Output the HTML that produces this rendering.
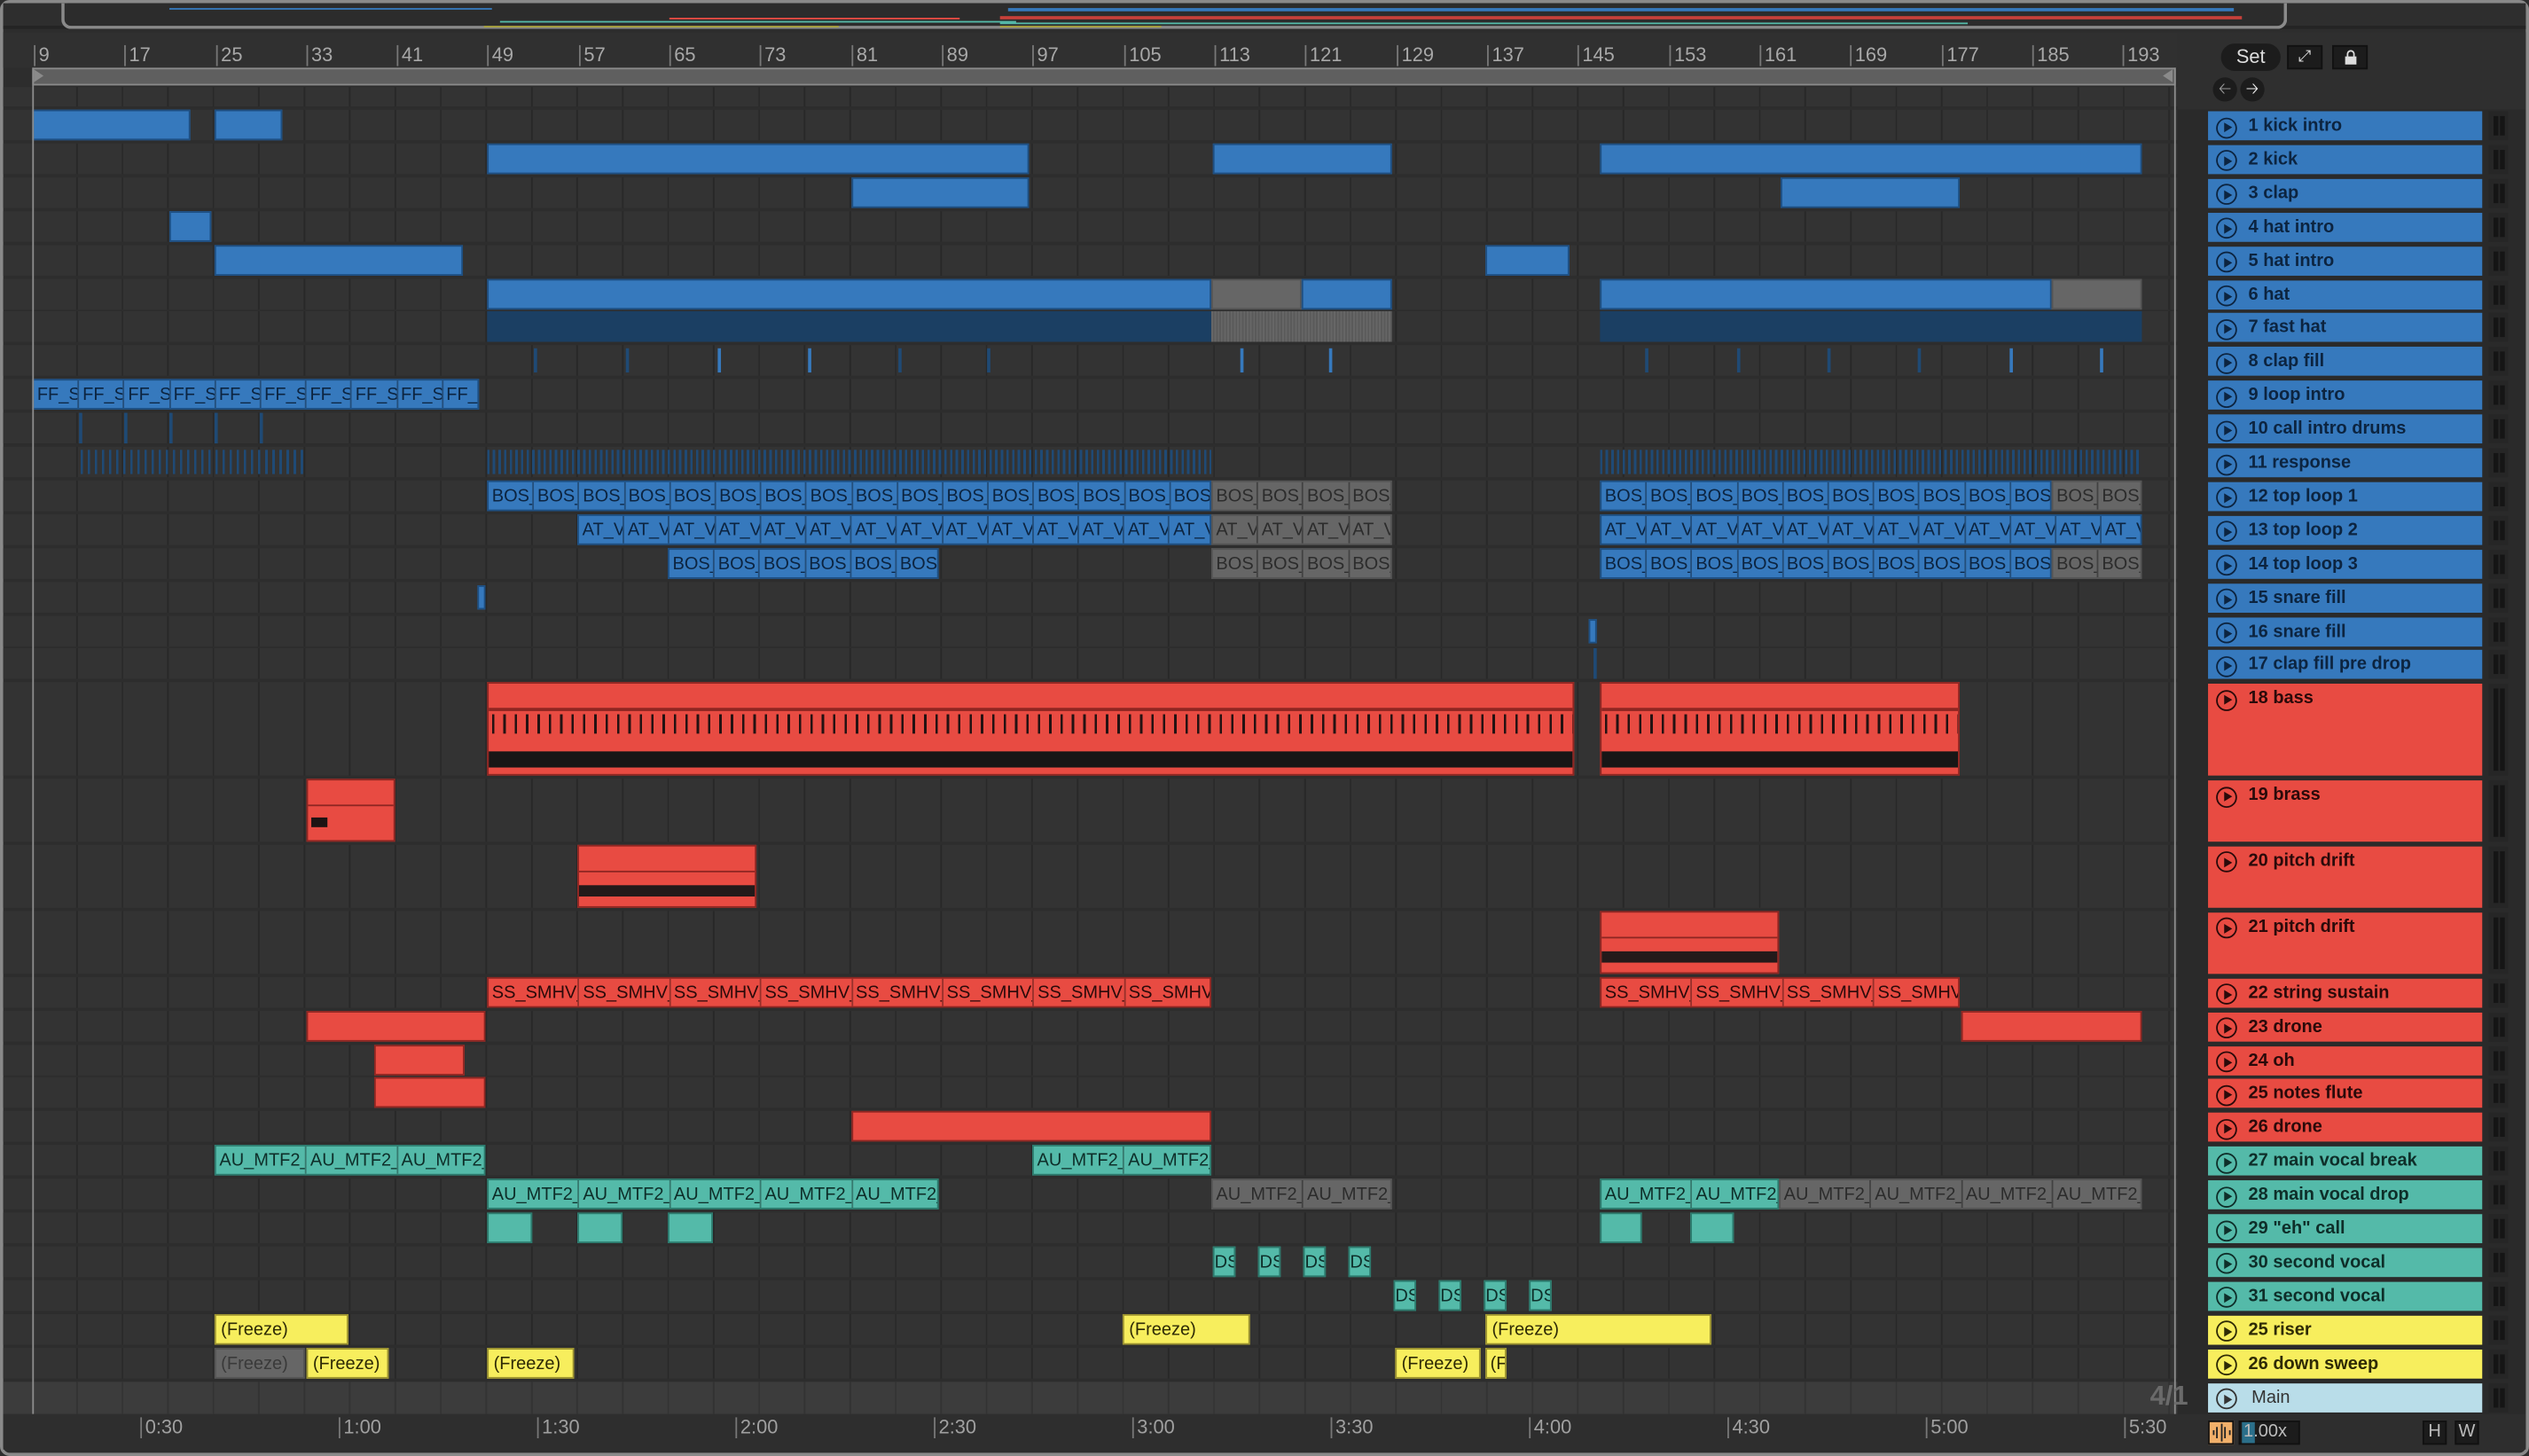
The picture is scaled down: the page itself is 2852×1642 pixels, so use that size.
<!DOCTYPE html>
<html><head><meta charset="utf-8"><style>
*{margin:0;padding:0;box-sizing:border-box}
html,body{width:2852px;height:1642px;overflow:hidden;background:#2b2b2b}
#s{position:absolute;left:0;top:0;width:1568px;height:903px;transform:scale(1.81888,1.81839);transform-origin:0 0;font-family:"Liberation Sans",sans-serif;background:#2d2d2d}
.ab{position:absolute}
.r{position:absolute;left:2px;width:1348px;background:#333 repeating-linear-gradient(90deg,transparent 0 27.2px,#282828 27.2px 28.2px);background-position:18px 0}
.c{position:absolute;top:0;bottom:0;overflow:hidden;white-space:nowrap;font-size:11px;line-height:18px;font-family:"Liberation Sans Narrow","Liberation Sans",sans-serif}
.b{background:#3679bd;border:1px solid #1e4f82;color:#0c2440}
.g{background:#666;border:1px solid #555;color:#2c2c2c}
.rd{background:#e84b42;border:1px solid #8e2622;color:#2a0a0a}
.t{background:#54baa9;border:1px solid #2c7a6d;color:#0e2e29}
.y{background:#f7ee5d;border:1px solid #9c9330;color:#2e2a05}
.c span{display:inline-block;overflow:hidden;padding-left:2px;border-right:1px solid rgba(0,0,0,.35);height:100%;vertical-align:top}
.q span{width:28.2px}.h span{width:56.4px}
.th{position:absolute;left:1369px;width:170px;font-weight:bold;font-size:11px;color:#0c2440;padding-left:25px;line-height:19px}
.th:before{content:"";position:absolute;left:5px;top:3.5px;width:11px;height:11px;border:1.5px solid currentColor;border-radius:50%}
.th:after{content:"";position:absolute;left:10px;top:7px;border-left:5px solid currentColor;border-top:3.5px solid transparent;border-bottom:3.5px solid transparent}
.hd{position:absolute;left:1543px;width:12px;background:#262626}
.hd:before{content:"";position:absolute;left:3px;top:3px;width:2.5px;bottom:3px;background:#151515}
.hd:after{content:"";position:absolute;left:7px;top:3px;width:2.5px;bottom:3px;background:#151515}
.rl{position:absolute;top:28px;font-size:12px;color:#a8a8a8;border-left:1px solid #777;padding-left:2px;line-height:13px}
.tl{position:absolute;top:879px;font-size:12px;color:#a0a0a0;border-left:1px solid #777;padding-left:2px;line-height:13px}
.tk{position:absolute;width:1.5px;background:#1f4a75}
</style></head><body><div id="s">
<div class="ab" style="left:0;top:0;width:1568px;height:903px;border:2px solid #8a8a8a;border-radius:6px"></div>
<div class="ab" style="left:2px;top:2px;width:1564px;height:16px;background:#2e2e2e;border-bottom:2px solid #242424"></div>
<div class="ab" style="left:38px;top:2px;width:1380px;height:16px;border:2px solid #8a8a8a;border-top:none;border-radius:0 0 6px 6px;background:#2c2c2c"></div>
<div class="ab" style="left:105px;top:5px;width:200px;height:1px;background:#3679bd"></div>
<div class="ab" style="left:625px;top:5px;width:760px;height:2px;background:#3679bd"></div>
<div class="ab" style="left:415px;top:11px;width:180px;height:1px;background:#e84b42"></div>
<div class="ab" style="left:620px;top:10px;width:770px;height:2px;background:#c8403a"></div>
<div class="ab" style="left:310px;top:13px;width:320px;height:1px;background:#54baa9"></div>
<div class="ab" style="left:620px;top:14px;width:600px;height:1px;background:#54baa9"></div>
<div class="ab" style="left:300px;top:16px;width:220px;height:1px;background:#a7a03a"></div>
<div class="ab" style="left:620px;top:16px;width:100px;height:1px;background:#a7a03a"></div>
<div class="ab" style="left:2px;top:20px;width:1348px;height:22px;background:#303030"></div>
<div class="rl" style="left:21px">9</div><div class="rl" style="left:77px">17</div><div class="rl" style="left:134px">25</div><div class="rl" style="left:190px">33</div><div class="rl" style="left:246px">41</div><div class="rl" style="left:302px">49</div><div class="rl" style="left:359px">57</div><div class="rl" style="left:415px">65</div><div class="rl" style="left:471px">73</div><div class="rl" style="left:528px">81</div><div class="rl" style="left:584px">89</div><div class="rl" style="left:640px">97</div><div class="rl" style="left:697px">105</div><div class="rl" style="left:753px">113</div><div class="rl" style="left:809px">121</div><div class="rl" style="left:866px">129</div><div class="rl" style="left:922px">137</div><div class="rl" style="left:978px">145</div><div class="rl" style="left:1035px">153</div><div class="rl" style="left:1091px">161</div><div class="rl" style="left:1147px">169</div><div class="rl" style="left:1204px">177</div><div class="rl" style="left:1260px">185</div><div class="rl" style="left:1316px">193</div>
<div class="ab" style="left:20px;top:42px;width:1329px;height:11px;background:#5f5f5f;border:1px solid #8a8a8a"></div>
<div class="ab" style="left:21px;top:43px;border-left:6px solid #8a8a8a;border-top:4.5px solid transparent;border-bottom:4.5px solid transparent"></div>
<div class="ab" style="left:1341px;top:43px;border-right:6px solid #8a8a8a;border-top:4.5px solid transparent;border-bottom:4.5px solid transparent"></div>
<div class="r" style="top:54px;height:12px"></div>

<div class="r" style="top:68px;height:19px"><div class="c b" style="left:18px;width:98px"></div><div class="c b" style="left:131px;width:42px"></div></div>
<div class="r" style="top:88.9px;height:19px"><div class="c b" style="left:300px;width:336px"></div><div class="c b" style="left:750px;width:111px"></div><div class="c b" style="left:990px;width:336px"></div></div>
<div class="r" style="top:109.8px;height:19px"><div class="c b" style="left:526px;width:110px"></div><div class="c b" style="left:1102px;width:111px"></div></div>
<div class="r" style="top:130.7px;height:19px"><div class="c b" style="left:103px;width:26px"></div></div>
<div class="r" style="top:151.6px;height:19px"><div class="c b" style="left:131px;width:154px"></div><div class="c b" style="left:919px;width:52px"></div></div>
<div class="r" style="top:172.5px;height:19px"><div class="c b" style="left:300px;width:449px"></div><div class="c g" style="left:749px;width:56px"></div><div class="c b" style="left:805px;width:56px"></div><div class="c b" style="left:990px;width:280px"></div><div class="c g" style="left:1270px;width:56px"></div></div>
<div class="r" style="top:193.4px;height:19px"><div class="c" style="left:300px;width:449px;background:#1b3f63"></div><div class="c" style="left:749px;width:112px;background:repeating-linear-gradient(90deg,#666 0 1px,#5a5a5a 1px 2px)"></div><div class="c" style="left:990px;width:336px;background:#1b3f63"></div></div>
<div class="r" style="top:214.3px;height:19px"><div class="tk" style="left:329px;top:2px;height:15px"></div><div class="tk" style="left:386px;top:2px;height:15px"></div><div class="tk" style="left:443px;top:2px;height:15px;background:#3679bd"></div><div class="tk" style="left:499px;top:2px;height:15px;background:#3679bd"></div><div class="tk" style="left:555px;top:2px;height:15px"></div><div class="tk" style="left:610px;top:2px;height:15px"></div><div class="tk" style="left:767px;top:2px;height:15px;background:#3679bd"></div><div class="tk" style="left:822px;top:2px;height:15px;background:#3679bd"></div><div class="tk" style="left:1018px;top:2px;height:15px"></div><div class="tk" style="left:1075px;top:2px;height:15px"></div><div class="tk" style="left:1131px;top:2px;height:15px"></div><div class="tk" style="left:1187px;top:2px;height:15px"></div><div class="tk" style="left:1244px;top:2px;height:15px;background:#3679bd"></div><div class="tk" style="left:1300px;top:2px;height:15px;background:#3679bd"></div></div>
<div class="r" style="top:235.2px;height:19px"><div class="c b q" style="left:18px;width:277px"><span>FF_S</span><span>FF_S</span><span>FF_S</span><span>FF_S</span><span>FF_S</span><span>FF_S</span><span>FF_S</span><span>FF_S</span><span>FF_S</span><span>FF_S</span></div></div>
<div class="r" style="top:256.1px;height:19px"><div class="tk" style="left:47px;top:0;height:19px"></div><div class="tk" style="left:75px;top:0;height:19px"></div><div class="tk" style="left:103px;top:0;height:19px"></div><div class="tk" style="left:131px;top:0;height:19px"></div><div class="tk" style="left:159px;top:0;height:19px"></div></div>
<div class="r" style="top:277px;height:19px"><div class="ab" style="left:48px;width:138px;top:2px;height:15px;background:repeating-linear-gradient(90deg,#1f4a75 0 1.5px,transparent 1.5px 4.4px)"></div><div class="ab" style="left:300px;width:449px;top:2px;height:15px;background:repeating-linear-gradient(90deg,#1f4a75 0 1.5px,transparent 1.5px 3.5px)"></div><div class="ab" style="left:990px;width:336px;top:2px;height:15px;background:repeating-linear-gradient(90deg,#1f4a75 0 1.5px,transparent 1.5px 3.5px)"></div></div>
<div class="r" style="top:297.9px;height:19px"><div class="c b q" style="left:300px;width:449px"><span>BOS_</span><span>BOS_</span><span>BOS_</span><span>BOS_</span><span>BOS_</span><span>BOS_</span><span>BOS_</span><span>BOS_</span><span>BOS_</span><span>BOS_</span><span>BOS_</span><span>BOS_</span><span>BOS_</span><span>BOS_</span><span>BOS_</span><span>BOS_</span></div><div class="c g q" style="left:749px;width:112px"><span>BOS_</span><span>BOS_</span><span>BOS_</span><span>BOS_</span></div><div class="c b q" style="left:990px;width:280px"><span>BOS_</span><span>BOS_</span><span>BOS_</span><span>BOS_</span><span>BOS_</span><span>BOS_</span><span>BOS_</span><span>BOS_</span><span>BOS_</span><span>BOS_</span></div><div class="c g q" style="left:1270px;width:56px"><span>BOS_</span><span>BOS_</span></div></div>
<div class="r" style="top:318.8px;height:19px"><div class="c b q" style="left:356px;width:393px"><span>AT_V</span><span>AT_V</span><span>AT_V</span><span>AT_V</span><span>AT_V</span><span>AT_V</span><span>AT_V</span><span>AT_V</span><span>AT_V</span><span>AT_V</span><span>AT_V</span><span>AT_V</span><span>AT_V</span><span>AT_V</span></div><div class="c g q" style="left:749px;width:112px"><span>AT_V</span><span>AT_V</span><span>AT_V</span><span>AT_V</span></div><div class="c b q" style="left:990px;width:336px"><span>AT_V</span><span>AT_V</span><span>AT_V</span><span>AT_V</span><span>AT_V</span><span>AT_V</span><span>AT_V</span><span>AT_V</span><span>AT_V</span><span>AT_V</span><span>AT_V</span><span>AT_V</span></div></div>
<div class="r" style="top:339.7px;height:19px"><div class="c b q" style="left:412px;width:168px"><span>BOS_</span><span>BOS_</span><span>BOS_</span><span>BOS_</span><span>BOS_</span><span>BOS_</span></div><div class="c g q" style="left:749px;width:112px"><span>BOS_</span><span>BOS_</span><span>BOS_</span><span>BOS_</span></div><div class="c b q" style="left:990px;width:280px"><span>BOS_</span><span>BOS_</span><span>BOS_</span><span>BOS_</span><span>BOS_</span><span>BOS_</span><span>BOS_</span><span>BOS_</span><span>BOS_</span><span>BOS_</span></div><div class="c g q" style="left:1270px;width:56px"><span>BOS_</span><span>BOS_</span></div></div>
<div class="r" style="top:360.6px;height:19px"><div class="c b" style="left:294px;width:5px;top:2px;bottom:2px"></div></div>
<div class="r" style="top:381.5px;height:19px"><div class="c b" style="left:983px;width:5px;top:2px;bottom:2px"></div></div>
<div class="r" style="top:402.4px;height:19px"><div class="tk" style="left:986px;top:0;height:19px"></div></div>
<div class="r" style="top:423.3px;height:58px"><div class="c rd" style="left:300px;width:674px"><div class="ab" style="left:0;right:0;top:15px;height:1.5px;background:#8e2622"></div><div class="ab" style="left:2px;right:0;top:19px;height:12px;background:repeating-linear-gradient(90deg,#241212 0 1.5px,transparent 1.5px 7.05px)"></div><div class="ab" style="left:0;right:0;top:42px;height:10px;background:#181616"></div></div><div class="c rd" style="left:990px;width:223px"><div class="ab" style="left:0;right:0;top:15px;height:1.5px;background:#8e2622"></div><div class="ab" style="left:2px;right:0;top:19px;height:12px;background:repeating-linear-gradient(90deg,#241212 0 1.5px,transparent 1.5px 7.05px)"></div><div class="ab" style="left:0;right:0;top:42px;height:10px;background:#181616"></div></div></div>
<div class="r" style="top:483px;height:39px"><div class="c rd" style="left:188px;width:55px"><div class="ab" style="left:0;right:0;top:15px;height:1px;background:#8e2622"></div><div class="ab" style="left:2px;width:10px;top:23px;height:6px;background:#1d1313"></div></div></div>
<div class="r" style="top:523.9px;height:39px"><div class="c rd" style="left:356px;width:111px"><div class="ab" style="left:0;right:0;top:15px;height:1px;background:#8e2622"></div><div class="ab" style="left:0;right:0;top:24px;height:7px;background:#231a1a"></div></div></div>
<div class="r" style="top:564.8px;height:39px"><div class="c rd" style="left:990px;width:111px"><div class="ab" style="left:0;right:0;top:15px;height:1px;background:#8e2622"></div><div class="ab" style="left:0;right:0;top:24px;height:7px;background:#231a1a"></div></div></div>
<div class="r" style="top:605.7px;height:19px"><div class="c rd h" style="left:300px;width:449px"><span>SS_SMHV_</span><span>SS_SMHV_</span><span>SS_SMHV_</span><span>SS_SMHV_</span><span>SS_SMHV_</span><span>SS_SMHV_</span><span>SS_SMHV_</span><span>SS_SMHV_</span></div><div class="c rd h" style="left:990px;width:223px"><span>SS_SMHV_</span><span>SS_SMHV_</span><span>SS_SMHV_</span><span>SS_SMHV_</span></div></div>
<div class="r" style="top:626.6px;height:19px"><div class="c rd" style="left:188px;width:111px"></div><div class="c rd" style="left:1214px;width:112px"></div></div>
<div class="r" style="top:647.5px;height:19px"><div class="c rd" style="left:230px;width:56px"></div></div>
<div class="r" style="top:668.4px;height:19px"><div class="c rd" style="left:230px;width:69px"></div></div>
<div class="r" style="top:689.3px;height:19px"><div class="c rd" style="left:526px;width:223px"></div></div>
<div class="r" style="top:710.2px;height:19px"><div class="c t h" style="left:131px;width:168px"><span>AU_MTF2_</span><span>AU_MTF2_</span><span>AU_MTF2_</span></div><div class="c t h" style="left:638px;width:111px"><span>AU_MTF2_</span><span>AU_MTF2_</span></div></div>
<div class="r" style="top:731.1px;height:19px"><div class="c t h" style="left:300px;width:280px"><span>AU_MTF2_</span><span>AU_MTF2_</span><span>AU_MTF2_</span><span>AU_MTF2_</span><span>AU_MTF2_</span></div><div class="c g h" style="left:749px;width:112px"><span>AU_MTF2_</span><span>AU_MTF2_</span></div><div class="c t h" style="left:990px;width:111px"><span>AU_MTF2_</span><span>AU_MTF2_</span></div><div class="c g h" style="left:1101px;width:225px"><span>AU_MTF2_</span><span>AU_MTF2_</span><span>AU_MTF2_</span><span>AU_MTF2_</span></div></div>
<div class="r" style="top:752px;height:19px"><div class="c t" style="left:300px;width:28px"></div><div class="c t" style="left:356px;width:28px"></div><div class="c t" style="left:412px;width:28px"></div><div class="c t" style="left:990px;width:26px"></div><div class="c t" style="left:1046px;width:27px"></div></div>
<div class="r" style="top:772.9px;height:19px"><div class="c t" style="left:750px;width:14px">DS</div><div class="c t" style="left:778px;width:14px">DS</div><div class="c t" style="left:806px;width:14px">DS</div><div class="c t" style="left:834px;width:14px">DS</div></div>
<div class="r" style="top:793.8px;height:19px"><div class="c t" style="left:862px;width:14px">DS</div><div class="c t" style="left:890px;width:14px">DS</div><div class="c t" style="left:918px;width:14px">DS</div><div class="c t" style="left:946px;width:14px">DS</div></div>
<div class="r" style="top:814.7px;height:19px"><div class="c y" style="left:131px;width:83px;padding-left:3px">(Freeze)</div><div class="c y" style="left:694px;width:79px;padding-left:3px">(Freeze)</div><div class="c y" style="left:919px;width:140px;padding-left:3px">(Freeze)</div></div>
<div class="r" style="top:835.6px;height:19px"><div class="c g" style="left:131px;width:56px;padding-left:3px;color:#3a3a3a">(Freeze)</div><div class="c y" style="left:188px;width:51px;padding-left:3px">(Freeze)</div><div class="c y" style="left:300px;width:54px;padding-left:3px">(Freeze)</div><div class="c y" style="left:863px;width:53px;padding-left:3px">(Freeze)</div><div class="c y" style="left:919px;width:13px;padding-left:2px">(F</div></div>
<div class="r" style="top:856.5px;height:20px;background-color:#3c3c3c;background-image:repeating-linear-gradient(90deg,transparent 0 27.2px,#333 27.2px 28.2px)"></div>
<div class="ab" style="left:20px;top:42px;width:1px;height:835px;background:#8d8d8d"></div>
<div class="ab" style="left:1348px;top:42px;width:1px;height:835px;background:#8d8d8d"></div>
<div class="ab" style="left:2px;top:877px;width:1348px;height:22px;background:#2e2e2e"></div>
<div class="tl" style="left:87px">0:30</div><div class="tl" style="left:210px">1:00</div><div class="tl" style="left:333px">1:30</div><div class="tl" style="left:456px">2:00</div><div class="tl" style="left:579px">2:30</div><div class="tl" style="left:702px">3:00</div><div class="tl" style="left:825px">3:30</div><div class="tl" style="left:948px">4:00</div><div class="tl" style="left:1071px">4:30</div><div class="tl" style="left:1194px">5:00</div><div class="tl" style="left:1317px">5:30</div>
<div class="ab" style="left:1350px;top:20px;width:216px;height:48px;background:#2f2f2f"></div>
<div class="ab" style="left:1377px;top:27px;width:37px;height:17px;background:#1c1c1c;border-radius:9px;color:#ddd;font-size:12px;text-align:center;line-height:17px">Set</div>
<div class="ab" style="left:1418px;top:28px;width:22px;height:15px;background:#1c1c1c;border:1px solid #111;color:#ddd;font-size:10px;text-align:center;line-height:13px">&#10530;</div>
<div class="ab" style="left:1446px;top:28px;width:22px;height:15px;background:#1c1c1c;border:1px solid #111"><div class="ab" style="left:7px;top:6px;width:7px;height:5px;background:#ddd"></div><div class="ab" style="left:8px;top:2px;width:5px;height:6px;border:1.5px solid #ddd;border-bottom:none;border-radius:3px 3px 0 0"></div></div>
<div class="ab" style="left:1372px;top:48px;width:15px;height:15px;border-radius:50%;background:#1c1c1c;color:#999;font-size:10px;text-align:center;line-height:15px">&#129120;</div>
<div class="ab" style="left:1389px;top:48px;width:15px;height:15px;border-radius:50%;background:#1c1c1c;color:#eee;font-size:10px;text-align:center;line-height:15px">&#129122;</div>
<div class="ab" style="left:1350px;top:68px;width:216px;height:809px;background:#2a2a2a"></div>
<div class="ab" style="left:1333px;top:856px;font-size:17px;font-weight:bold;color:#6a6a6a">4/1</div>
<div class="th" style="top:69px;height:18px;background:#3679bd">1 kick intro</div><div class="hd" style="top:69px;height:18px"></div>
<div class="th" style="top:89.9px;height:18px;background:#3679bd">2 kick</div><div class="hd" style="top:89.9px;height:18px"></div>
<div class="th" style="top:110.8px;height:18px;background:#3679bd">3 clap</div><div class="hd" style="top:110.8px;height:18px"></div>
<div class="th" style="top:131.7px;height:18px;background:#3679bd">4 hat intro</div><div class="hd" style="top:131.7px;height:18px"></div>
<div class="th" style="top:152.6px;height:18px;background:#3679bd">5 hat intro</div><div class="hd" style="top:152.6px;height:18px"></div>
<div class="th" style="top:173.5px;height:18px;background:#3679bd">6 hat</div><div class="hd" style="top:173.5px;height:18px"></div>
<div class="th" style="top:194.4px;height:18px;background:#3679bd">7 fast hat</div><div class="hd" style="top:194.4px;height:18px"></div>
<div class="th" style="top:215.3px;height:18px;background:#3679bd">8 clap fill</div><div class="hd" style="top:215.3px;height:18px"></div>
<div class="th" style="top:236.2px;height:18px;background:#3679bd">9 loop intro</div><div class="hd" style="top:236.2px;height:18px"></div>
<div class="th" style="top:257.1px;height:18px;background:#3679bd">10 call intro drums</div><div class="hd" style="top:257.1px;height:18px"></div>
<div class="th" style="top:278px;height:18px;background:#3679bd">11 response</div><div class="hd" style="top:278px;height:18px"></div>
<div class="th" style="top:298.9px;height:18px;background:#3679bd">12 top loop 1</div><div class="hd" style="top:298.9px;height:18px"></div>
<div class="th" style="top:319.8px;height:18px;background:#3679bd">13 top loop 2</div><div class="hd" style="top:319.8px;height:18px"></div>
<div class="th" style="top:340.7px;height:18px;background:#3679bd">14 top loop 3</div><div class="hd" style="top:340.7px;height:18px"></div>
<div class="th" style="top:361.6px;height:18px;background:#3679bd">15 snare fill</div><div class="hd" style="top:361.6px;height:18px"></div>
<div class="th" style="top:382.5px;height:18px;background:#3679bd">16 snare fill</div><div class="hd" style="top:382.5px;height:18px"></div>
<div class="th" style="top:403.4px;height:18px;background:#3679bd">17 clap fill pre drop</div><div class="hd" style="top:403.4px;height:18px"></div>
<div class="th" style="top:424.3px;height:57px;background:#e84b42;color:#2a0a0a">18 bass</div><div class="hd" style="top:424.3px;height:57px"></div>
<div class="th" style="top:484px;height:38px;background:#e84b42;color:#2a0a0a">19 brass</div><div class="hd" style="top:484px;height:38px"></div>
<div class="th" style="top:524.9px;height:38px;background:#e84b42;color:#2a0a0a">20 pitch drift</div><div class="hd" style="top:524.9px;height:38px"></div>
<div class="th" style="top:565.8px;height:38px;background:#e84b42;color:#2a0a0a">21 pitch drift</div><div class="hd" style="top:565.8px;height:38px"></div>
<div class="th" style="top:606.7px;height:18px;background:#e84b42;color:#2a0a0a">22 string sustain</div><div class="hd" style="top:606.7px;height:18px"></div>
<div class="th" style="top:627.6px;height:18px;background:#e84b42;color:#2a0a0a">23 drone</div><div class="hd" style="top:627.6px;height:18px"></div>
<div class="th" style="top:648.5px;height:18px;background:#e84b42;color:#2a0a0a">24 oh</div><div class="hd" style="top:648.5px;height:18px"></div>
<div class="th" style="top:669.4px;height:18px;background:#e84b42;color:#2a0a0a">25 notes flute</div><div class="hd" style="top:669.4px;height:18px"></div>
<div class="th" style="top:690.3px;height:18px;background:#e84b42;color:#2a0a0a">26 drone</div><div class="hd" style="top:690.3px;height:18px"></div>
<div class="th" style="top:711.2px;height:18px;background:#54baa9;color:#0e2e29">27 main vocal break</div><div class="hd" style="top:711.2px;height:18px"></div>
<div class="th" style="top:732.1px;height:18px;background:#54baa9;color:#0e2e29">28 main vocal drop</div><div class="hd" style="top:732.1px;height:18px"></div>
<div class="th" style="top:753px;height:18px;background:#54baa9;color:#0e2e29">29 "eh" call</div><div class="hd" style="top:753px;height:18px"></div>
<div class="th" style="top:773.9px;height:18px;background:#54baa9;color:#0e2e29">30 second vocal</div><div class="hd" style="top:773.9px;height:18px"></div>
<div class="th" style="top:794.8px;height:18px;background:#54baa9;color:#0e2e29">31 second vocal</div><div class="hd" style="top:794.8px;height:18px"></div>
<div class="th" style="top:815.7px;height:18px;background:#f7ee5d;color:#2e2a05">25 riser</div><div class="hd" style="top:815.7px;height:18px"></div>
<div class="th" style="top:836.6px;height:18px;background:#f7ee5d;color:#2e2a05">26 down sweep</div><div class="hd" style="top:836.6px;height:18px"></div>
<div class="th" style="top:857.5px;height:18px;background:#b9dde9;color:#333;font-weight:normal;padding-left:27px">Main</div><div class="hd" style="top:857.5px;height:18px"></div>
<div class="ab" style="left:1350px;top:877px;width:216px;height:22px;background:#2e2e2e"></div>
<div class="ab" style="left:1369px;top:881px;width:16px;height:15px;background:#f2b06a;border:1px solid #111"><div class="ab" style="left:6.5px;top:1px;width:1px;height:11px;background:#222"></div><div class="ab" style="left:4px;top:3px;width:1px;height:7px;background:#222"></div><div class="ab" style="left:9px;top:3px;width:1px;height:7px;background:#222"></div><div class="ab" style="left:1.5px;top:5px;width:1px;height:3px;background:#222"></div><div class="ab" style="left:11.5px;top:5px;width:1px;height:3px;background:#222"></div></div>
<div class="ab" style="left:1388px;top:881px;width:38px;height:15px;background:#1c1c1c;border:1px solid #111;font-size:11px;color:#bbb;line-height:13px;padding-left:2px"><div class="ab" style="left:1px;top:0;width:8px;height:13px;background:#2b6f8a"></div><span style="position:relative">1.00x</span></div>
<div class="ab" style="left:1502px;top:881px;width:15px;height:15px;background:#1c1c1c;border:1px solid #111;font-size:11px;color:#bbb;text-align:center;line-height:13px">H</div>
<div class="ab" style="left:1522px;top:881px;width:15px;height:15px;background:#1c1c1c;border:1px solid #111;font-size:11px;color:#bbb;text-align:center;line-height:13px">W</div>
</div></body></html>
